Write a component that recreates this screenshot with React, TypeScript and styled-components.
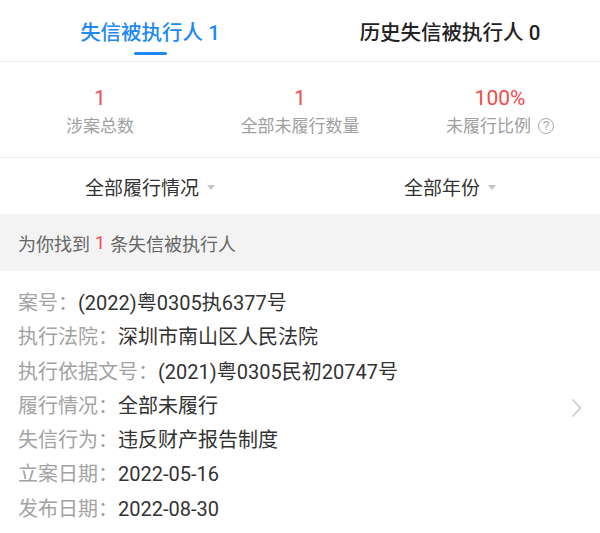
import React from "react";
import styled, { createGlobalStyle } from "styled-components";

const Global = createGlobalStyle`
  html, body { margin: 0; padding: 0; background: #fff; }
  body { font-family: "Roboto", "Noto Sans CJK SC", sans-serif; }
`;

const Page = styled.div`
  width: 600px;
  height: 533px;
  overflow: hidden;
  background: #fff;
  display: flex;
  flex-direction: column;
`;

const Tabs = styled.div`
  height: 62px;
  display: grid;
  grid-template-columns: 1fr 1fr;
  border-bottom: 1px solid #f0f0f0;
  box-sizing: border-box;
`;

const Tab = styled.div<{ $active?: boolean }>`
  position: relative;
  display: flex;
  align-items: center;
  justify-content: center;
  font-size: 20.5px;
  font-weight: 500;
  color: ${(p) => (p.$active ? "#1e88f5" : "#222")};
  &::after {
    content: "";
    display: ${(p) => (p.$active ? "block" : "none")};
    position: absolute;
    left: 50%;
    bottom: 6px;
    width: 33px;
    height: 3px;
    margin-left: -16px;
    border-radius: 2px;
    background: #1e88f5;
  }
`;

const Stats = styled.div`
  display: grid;
  grid-template-columns: repeat(3, 1fr);
  padding: 22px 0 19px;
  border-bottom: 1px solid #f0f0f0;
`;

const Stat = styled.div`
  display: flex;
  flex-direction: column;
  align-items: center;
  gap: 2px;
`;

const StatValue = styled.div`
  font-size: 21px;
  line-height: 28px;
  color: #f54a4a;
`;

const StatLabel = styled.div`
  display: flex;
  align-items: center;
  gap: 7px;
  font-size: 17px;
  line-height: 24px;
  color: #a0a0a0;
`;

const Help = styled.span`
  width: 16px;
  height: 16px;
  border: 1.4px solid #a8a8a8;
  border-radius: 50%;
  box-sizing: border-box;
  display: inline-flex;
  align-items: center;
  justify-content: center;
  font-size: 12px;
  line-height: 1;
  color: #a0a0a0;
  font-family: "Liberation Sans", sans-serif;
`;

const Filters = styled.div`
  height: 56px;
  display: grid;
  grid-template-columns: 1fr 1fr;
`;

const Filter = styled.div`
  display: flex;
  align-items: center;
  justify-content: center;
  gap: 8px;
  font-size: 19px;
  color: #333;
`;

const Caret = styled.span`
  width: 0;
  height: 0;
  border-left: 4.5px solid transparent;
  border-right: 4.5px solid transparent;
  border-top: 5px solid #c4c4c4;
  margin-top: 2px;
`;

const Notice = styled.div`
  height: 57px;
  background: #f3f3f3;
  display: flex;
  align-items: center;
  padding-left: 18px;
  font-size: 18px;
  color: #666;
`;

const Count = styled.span`
  color: #f54a4a;
  margin: 0 5px;
`;

const Card = styled.div`
  flex: 1;
  display: flex;
  align-items: center;
  padding: 15px 18px 0 18px;
`;

const Fields = styled.div`
  flex: 1;
  display: flex;
  flex-direction: column;
  align-self: flex-start;
`;

const Row = styled.div`
  display: flex;
  font-size: 20px;
  line-height: 34.3px;
  white-space: nowrap;
`;

const Label = styled.span`
  color: #a3a3a3;
`;

const Value = styled.span`
  color: #333;
`;

const Chevron = styled.svg`
  width: 11px;
  height: 20px;
  flex-shrink: 0;
  margin-top: -4px;
`;

const rows: [string, string][] = [
  ["案号", "(2022)粤0305执6377号"],
  ["执行法院", "深圳市南山区人民法院"],
  ["执行依据文号", "(2021)粤0305民初20747号"],
  ["履行情况", "全部未履行"],
  ["失信行为", "违反财产报告制度"],
  ["立案日期", "2022-05-16"],
  ["发布日期", "2022-08-30"],
];

export default function App() {
  return (
    <Page>
      <Global />
      <Tabs>
        <Tab $active>失信被执行人 1</Tab>
        <Tab>历史失信被执行人 0</Tab>
      </Tabs>
      <Stats>
        <Stat>
          <StatValue>1</StatValue>
          <StatLabel>涉案总数</StatLabel>
        </Stat>
        <Stat>
          <StatValue>1</StatValue>
          <StatLabel>全部未履行数量</StatLabel>
        </Stat>
        <Stat>
          <StatValue>100%</StatValue>
          <StatLabel>
            未履行比例<Help>?</Help>
          </StatLabel>
        </Stat>
      </Stats>
      <Filters>
        <Filter>
          全部履行情况<Caret />
        </Filter>
        <Filter>
          全部年份<Caret />
        </Filter>
      </Filters>
      <Notice>
        为你找到<Count>1</Count>条失信被执行人
      </Notice>
      <Card>
        <Fields>
          {rows.map(([k, v]) => (
            <Row key={k}>
              <Label>{k}：</Label>
              <Value>{v}</Value>
            </Row>
          ))}
        </Fields>
        <Chevron viewBox="0 0 11 20">
          <path d="M1.5 1.5 L9.5 10 L1.5 18.5" fill="none" stroke="#c8c8c8" strokeWidth="1.5" />
        </Chevron>
      </Card>
    </Page>
  );
}
